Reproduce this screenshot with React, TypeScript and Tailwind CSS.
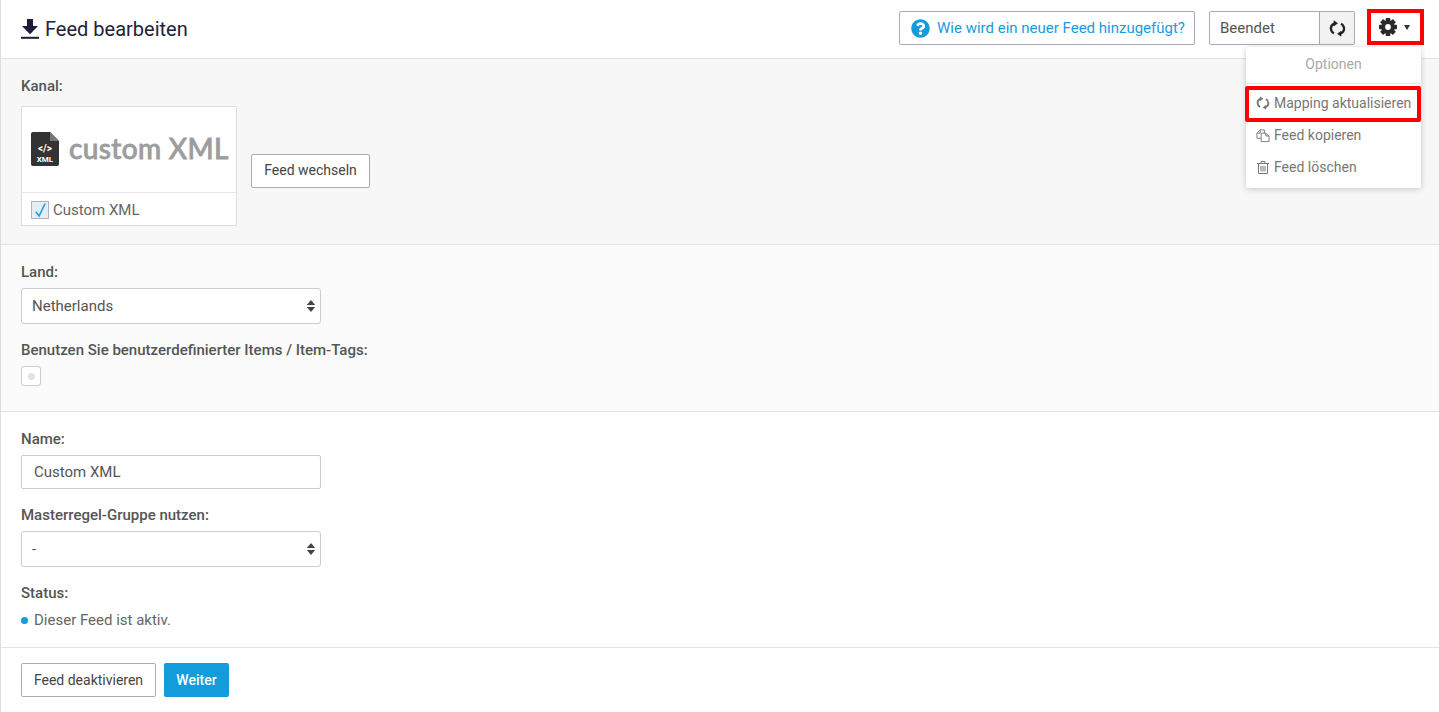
import { FaQuestionCircle } from 'react-icons/fa'

const font = "[font-family:Roboto,'Liberation_Sans',sans-serif]"

function SyncIcon({ className }: { className?: string }) {
  return (
    <svg viewBox="0 0 16 16" className={className} fill="none" stroke="currentColor" strokeWidth="2.1">
      <path d="M4.6 12.6 C1 10.2 0.6 5.2 5 3.4" />
      <path d="M11.4 3.4 C15 5.8 15.4 10.8 11 12.6" />
      <path d="M4.4 0.2 L8.4 3 L4.4 6 Z" fill="currentColor" stroke="none" />
      <path d="M11.6 15.8 L7.6 13 L11.6 10 Z" fill="currentColor" stroke="none" />
    </svg>
  )
}

function GearIcon({ className }: { className?: string }) {
  const teeth = [0, 45, 90, 135]
  return (
    <svg viewBox="0 0 18 18" className={className} fill="currentColor">
      {teeth.map((deg) => (
        <rect key={deg} x="6.7" y="0" width="4.6" height="18" rx="0.8" transform={`rotate(${deg} 9 9)`} />
      ))}
      <circle cx="9" cy="9" r="6.8" />
      <circle cx="9" cy="9" r="2.9" fill="#fff" />
    </svg>
  )
}

function CopyIcon({ className }: { className?: string }) {
  return (
    <svg viewBox="0 0 15 15" className={className} fill="none" stroke="currentColor" strokeWidth="1">
      <path d="M5.5 10.5H1V5L4.5 1.5H9V5" />
      <path d="M4.5 1.5V5H1" />
      <path d="M5.5 5H10.5L14 8V14H5.5Z" fill="#fff" />
      <path d="M10.5 5V8H14" />
    </svg>
  )
}

function TrashIcon({ className }: { className?: string }) {
  return (
    <svg viewBox="0 0 14 15" className={className} fill="none" stroke="currentColor" strokeWidth="1">
      <path d="M1 3.5H13" />
      <path d="M5 3V1.5H9V3" />
      <path d="M2.5 3.5V13.5H11.5V3.5" />
      <path d="M5 6V11.5M7 6V11.5M9 6V11.5" />
    </svg>
  )
}

function SortCaret() {
  return (
    <svg viewBox="0 0 10 14" className="absolute right-[5px] top-1/2 h-[13px] w-[10px] -translate-y-1/2 text-[#444]" fill="currentColor">
      <path d="M5 0.5 9.5 5.8H0.5Z" />
      <path d="M5 13.5 9.5 8.2H0.5Z" />
    </svg>
  )
}

function FieldLabel({ children }: { children: string }) {
  return <label className="block h-5 text-[15px] leading-5 font-medium text-[#555]">{children}</label>
}

function SelectField({ value }: { value: string }) {
  return (
    <div className="relative h-9 w-[300px]">
      <select
        defaultValue={value}
        className={`h-full w-full appearance-none rounded-[3px] border border-[#ccc] bg-white px-[10px] text-[15px] text-[#555] ${font}`}
      >
        <option>{value}</option>
      </select>
      <SortCaret />
    </div>
  )
}

export default function App() {
  const menuItems = [
    { icon: SyncIcon, label: 'Mapping aktualisieren', iconClass: 'h-[14px] w-[14px]' },
    { icon: CopyIcon, label: 'Feed kopieren', iconClass: 'h-[15px] w-[15px]' },
    { icon: TrashIcon, label: 'Feed löschen', iconClass: 'h-[15px] w-[14px]' },
  ]

  return (
    <div className={`relative h-[712px] w-[1439px] overflow-hidden border-l border-[#ddd] bg-white ${font}`}>
      {/* Header */}
      <header className="flex h-[59px] items-center justify-between border-b border-[#e3e3e3] pr-[15px] pl-[20px]">
        <div className="flex items-center">
          <svg viewBox="0 0 18 20" className="h-[20px] w-[18px] text-[#1d1d3a]" fill="currentColor">
            <path d="M6 0H12V7H17L9 15.2 1 7H6Z" />
            <rect x="0" y="17.8" width="18" height="2" />
          </svg>
          <h1 className="ml-[6px] text-xl leading-none text-[#22223a]">Feed bearbeiten</h1>
        </div>

        <div className="mt-[9px] flex items-start self-start">
          <button className="mt-[2px] flex h-[34px] w-[296px] items-center rounded-[2px] border border-[#aaaab5] bg-white pl-[11px] text-[15px] text-[#1a9bdb]">
            <FaQuestionCircle className="mr-[7px] h-[19px] w-[19px] text-[#129cdb]" />
            Wie wird ein neuer Feed hinzugefügt?
          </button>
          <div className="mt-[2px] ml-[14px] flex h-[34px] w-[146px] rounded-[2px] border border-[#aaaab5]">
            <div className="flex-1 pl-[10px] text-[15px] leading-[32px] text-[#555]">Beendet</div>
            <div className="flex w-[35px] items-center justify-center border-l border-[#aaaab5] bg-[#f2f2f2]">
              <SyncIcon className="h-[17px] w-[17px] text-[#222]" />
            </div>
          </div>
          <div className="ml-[12px] flex h-[36px] w-[57px] items-center justify-start gap-[7px] border-[4px] border-[#f00] pl-[8px]">
            <GearIcon className="h-[18px] w-[18px] text-[#2a2a2a]" />
            <span className="h-0 w-0 border-x-[3px] border-t-[5px] border-x-transparent border-t-[#333]" />
          </div>
        </div>
      </header>

      {/* Kanal */}
      <section className="border-b border-[#e3e3e3] bg-[#f7f7f7] pt-[17px] pr-5 pb-[18px] pl-5">
        <div className="mb-[10px]">
          <FieldLabel>Kanal:</FieldLabel>
        </div>
        <div className="flex items-end">
          <div className="h-[120px] w-[216px] border border-[#dedede] bg-white">
            <div className="flex h-[86px] items-center border-b border-[#e6e6e6] pb-[2px] pl-[9px]">
              <svg viewBox="0 0 28 34" className="h-[34px] w-[28px] shrink-0">
                <path d="M2 0H19L28 9V32a2 2 0 0 1-2 2H2a2 2 0 0 1-2-2V2a2 2 0 0 1 2-2Z" fill="#333" />
                <path d="M19 0L28 9H19Z" fill="#777" />
                <text x="14" y="20" textAnchor="middle" fontSize="10" fontWeight="700" fill="#fff" fontFamily="Roboto">{'</>'}</text>
                <text x="14" y="30" textAnchor="middle" fontSize="8" fontWeight="700" fill="#fff" fontFamily="Roboto">XML</text>
              </svg>
              <span className="mb-[1px] ml-[10px] text-[28px] leading-none font-medium tracking-[0.35px] whitespace-nowrap text-[#9d9d9d] [-webkit-text-stroke:0.8px_#9d9d9d] [font-family:Lato,sans-serif]">custom XML</span>
            </div>
            <div className="flex h-[32px] items-center pt-[2px] pl-[9px]">
              <span className="flex h-[18px] w-[18px] items-center justify-center border border-[#a9b5c0] bg-[#e6eef4]">
                <svg viewBox="0 0 14 16" className="h-[16px] w-[13px]" fill="none" stroke="#1f9fe6" strokeWidth="1.8">
                  <path d="M2 10 L5.5 14.5 L12 1" />
                </svg>
              </span>
              <span className="ml-[4px] text-[15px] text-[#666]">Custom XML</span>
            </div>
          </div>
          <button className="mb-[38px] ml-[14px] h-[34px] w-[119px] rounded-[2px] border border-[#aaaab5] bg-white pb-[2px] text-sm text-[#444]">
            Feed wechseln
          </button>
        </div>
      </section>

      {/* Land */}
      <section className="border-b border-[#e3e3e3] bg-[#fbfbfb] pt-[17px] pr-5 pb-[25px] pl-5">
        <div className="mb-[6px]">
          <FieldLabel>Land:</FieldLabel>
        </div>
        <SelectField value="Netherlands" />
        <div className="mt-4 mb-[6px]">
          <FieldLabel>Benutzen Sie benutzerdefinierter Items / Item-Tags:</FieldLabel>
        </div>
        <div className="flex h-5 w-5 items-center justify-center rounded-[3px] border border-[#ccc] bg-white">
          <span className="h-[7px] w-[7px] rounded-full bg-[#e2e2e2]" />
        </div>
      </section>

      {/* Name */}
      <section className="border-b border-[#e3e3e3] pt-[17px] pr-5 pb-[17px] pl-5">
        <div className="mb-[6px]">
          <FieldLabel>Name:</FieldLabel>
        </div>
        <input
          readOnly
          value="Custom XML"
          className="block h-[34px] w-[300px] rounded-[2px] border border-[#ccc] bg-white px-3 text-[15px] text-[#555] outline-none"
        />
        <div className="mt-4 mb-[6px]">
          <FieldLabel>Masterregel-Gruppe nutzen:</FieldLabel>
        </div>
        <SelectField value="-" />
        <div className="mt-4">
          <FieldLabel>Status:</FieldLabel>
        </div>
        <div className="mt-[7px] flex h-5 items-center text-[15px] text-[#666]">
          <span className="mr-[6px] h-[7px] w-[7px] rounded-full bg-[#129cdb]" />
          Dieser Feed ist aktiv.
        </div>
      </section>

      {/* Footer */}
      <div className="flex gap-2 pt-[15px] pl-5">
        <button className="h-[34px] w-[135px] rounded-[2px] border border-[#aaaab5] bg-white text-sm text-[#444]">
          Feed deaktivieren
        </button>
        <button className="h-[34px] w-[65px] rounded-[2px] bg-[#129cdb] text-sm font-medium text-white">Weiter</button>
      </div>

      {/* Options menu */}
      <div className="absolute top-[47px] left-[1245px] h-[141px] w-[175px] rounded-[2px] bg-white shadow-[0_1px_6px_rgba(0,0,0,0.2)]">
        <div className="h-[37px] border-b border-[#e3e3e3] pt-[7px] text-center text-sm leading-5 text-[#aaa]">Optionen</div>
        <div className="pt-[3px]">
          {menuItems.map((item, idx) => (
            <div
              key={idx}
              className={`flex h-8 items-center pl-[10px] text-sm text-[#777] ${idx === 0 ? 'relative' : ''}`}
            >
              <span className="mr-[4px] flex w-[14px] items-center justify-center">
                <item.icon className={item.iconClass} />
              </span>
              {item.label}
              {idx === 0 && <span className="absolute -top-[1px] -left-[1px] h-[36px] w-[176px] rounded-[2px] border-[4px] border-[#f00]" />}
            </div>
          ))}
        </div>
      </div>
    </div>
  )
}
